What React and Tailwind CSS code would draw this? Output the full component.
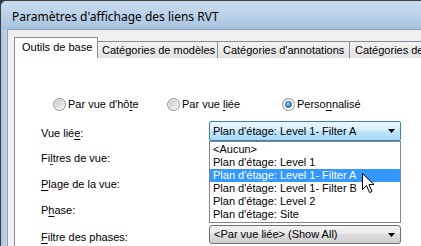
import React from "react";

const F = { fontFamily: '"Liberation Sans", Arial, sans-serif' };
const T = { fontFamily: '"Noto Sans", sans-serif' };

function Radio({ checked }) {
  return (
    <span className="relative inline-flex h-[13px] w-[13px] shrink-0 items-center justify-center rounded-full border border-[#8e8f8f] bg-[linear-gradient(135deg,#e6e6e6,#fdfdfd)]">
      {checked ? (
        <span className="h-[7px] w-[7px] rounded-full border border-[#2c628b] bg-[radial-gradient(circle_at_40%_35%,#a9dcf7,#2a7cc4_70%)]" />
      ) : (
        <span className="h-[9px] w-[9px] rounded-full bg-[linear-gradient(135deg,#c8c8c8,#f4f4f4)]" />
      )}
    </span>
  );
}

function Arrow() {
  return (
    <svg width="7" height="4" viewBox="0 0 7 4" className="shrink-0">
      <path d="M0 0 L7 0 L3.5 4 Z" fill="#000" />
    </svg>
  );
}

const items = [
  "<Aucun>",
  "Plan d'étage: Level 1",
  "Plan d'étage: Level 1- Filter A",
  "Plan d'étage: Level 1- Filter B",
  "Plan d'étage: Level 2",
  "Plan d'étage: Site",
];

export default function App() {
  return (
    <div
      className="relative h-[246px] w-[421px] overflow-hidden whitespace-nowrap bg-[#2f3a46] text-[11px] leading-none text-black"
      style={F}
    >
      <div className="flex h-full w-[460px] flex-col rounded-tl-[6px] border-l border-t border-[#3a3f45] bg-[linear-gradient(180deg,#cadcee_0px,#b9d0e8_16px,#a7c2df_28px)]">
        <div className="flex h-[28px] shrink-0 items-center pl-[11px] pt-[4px] text-[12px]" style={T}>
          Paramètres d'affichage des liens RVT
        </div>
        <div className="flex min-h-0 flex-1">
          <div className="w-[6px] shrink-0 bg-[linear-gradient(90deg,#aac4df,#c3d8ec)]" />
          <div className="flex flex-1 flex-col border-l border-t border-[#8da0b6] bg-[#f0f0f0] pl-[6px] pt-[7px]">
            <div className="relative z-10 flex h-[21px] items-end">
              <div className="flex h-[21px] w-[84px] shrink-0 items-center border border-b-0 border-[#898c95] bg-white pb-[1px] pl-[7px]">
                Outils de base
              </div>
              <div className="flex h-[17px] w-[120px] shrink-0 items-center border border-b-0 border-l-0 border-[#898c95] bg-[linear-gradient(180deg,#f2f2f2,#e3e3e3)] pl-[4px]">
                Catégories de modèles
              </div>
              <div className="flex h-[17px] w-[132px] shrink-0 items-center border border-b-0 border-l-0 border-[#898c95] bg-[linear-gradient(180deg,#f2f2f2,#e3e3e3)] pl-[5px]">
                Catégories d'annotations
              </div>
              <div className="flex h-[17px] w-[120px] shrink-0 items-center border border-b-0 border-l-0 border-[#898c95] bg-[linear-gradient(180deg,#f2f2f2,#e3e3e3)] pl-[5px]">
                Catégories de modèles
              </div>
            </div>
            <div className="-mt-[1px] flex flex-1 flex-col border-l border-t border-[#898c95] bg-white pl-[26px] pt-[36px]">
              <div className="flex h-[20px] items-center pl-[12px]">
                <div className="flex w-[114px] items-center gap-[2px]">
                  <Radio />
                  <span>
                    Par vue d'hô<span className="underline underline-offset-2">t</span>e
                  </span>
                </div>
                <div className="flex w-[115px] items-center gap-[2px]">
                  <Radio />
                  <span>
                    Par vue <span className="underline underline-offset-2">l</span>iée
                  </span>
                </div>
                <div className="flex items-center gap-[2px]">
                  <Radio checked />
                  <span>
                    Perso<span className="underline underline-offset-2">n</span>nalisé
                  </span>
                </div>
              </div>
              <div className="mt-[5px] flex flex-col">
                <div className="flex h-[26px] items-start">
                  <div className="mt-[9px] w-[168px] shrink-0">
                    Vue lié<span className="underline underline-offset-2">e</span>:
                  </div>
                  <div className="relative mt-[2px]">
                    <div className="flex h-[20px] w-[192px] items-center justify-between rounded-[2px] border border-[#3c7fb1] bg-[linear-gradient(180deg,#eaf6fd_0%,#d9f0fc_45%,#bee6fd_50%,#a7d9f5_100%)] pl-[3px] pr-[5px]">
                      <span>Plan d'étage: Level 1- Filter A</span>
                      <Arrow />
                    </div>
                    <div className="absolute left-0 top-[20px] z-20 flex w-[192px] flex-col border border-[#828790] bg-white py-[1px]">
                      {items.map((t, i) => (
                        <div
                          key={t}
                          className={
                            i === 2
                              ? "flex h-[13px] items-center bg-[#3399ff] pl-[3px] text-white"
                              : "flex h-[13px] items-center pl-[3px]"
                          }
                        >
                          {t}
                        </div>
                      ))}
                    </div>
                    <svg
                      className="absolute left-[153px] top-[52px] z-30"
                      width="13"
                      height="21"
                      viewBox="0 0 13 21"
                    >
                      <path
                        d="M0.5 0.5 L0.5 16.5 L4.5 12.5 L7.5 19.5 L10 18.5 L7 11.5 L12 11.5 Z"
                        fill="#fff"
                        stroke="#000"
                        strokeWidth="1"
                      />
                    </svg>
                  </div>
                </div>
                <div className="flex h-[26px] items-center">
                  <div className="w-[168px]">
                    Fi<span className="underline underline-offset-2">l</span>tres de vue:
                  </div>
                </div>
                <div className="flex h-[26px] items-center">
                  <div className="w-[168px]">
                    <span className="underline underline-offset-2">P</span>lage de la vue:
                  </div>
                </div>
                <div className="flex h-[26px] items-center">
                  <div className="w-[168px]">
                    P<span className="underline underline-offset-2">h</span>ase:
                  </div>
                </div>
                <div className="flex h-[26px] items-start">
                  <div className="mt-[9px] w-[168px] shrink-0">
                    <span className="underline underline-offset-2">F</span>iltre des phases:
                  </div>
                  <div className="mt-[2px] flex h-[19px] w-[192px] items-center justify-between rounded-[3px] border border-[#707070] bg-[linear-gradient(180deg,#f2f2f2_0%,#ebebeb_45%,#dddddd_50%,#cfcfcf_100%)] pl-[4px] pr-[5px]">
                    <span>&lt;Par vue liée&gt; (Show All)</span>
                    <Arrow />
                  </div>
                </div>
              </div>
            </div>
          </div>
        </div>
      </div>
    </div>
  );
}
